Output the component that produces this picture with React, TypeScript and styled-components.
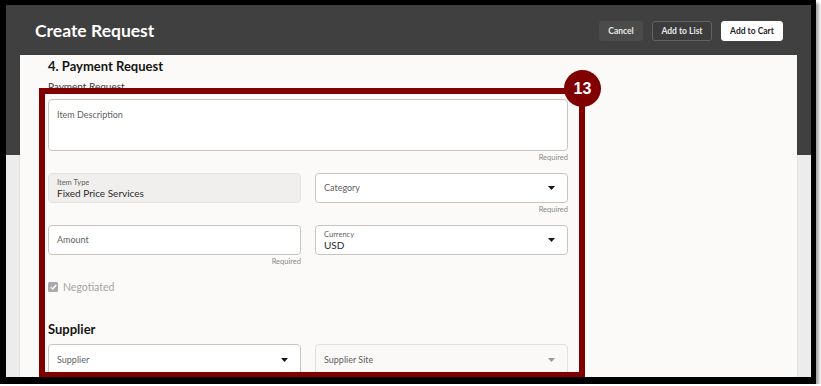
import React from 'react';
import styled, { createGlobalStyle } from 'styled-components';

const Global = createGlobalStyle`
  html, body { margin: 0; padding: 0; background: #ffffff; }
  body { font-family: Lato, "Noto Sans", sans-serif; }
  * { box-sizing: border-box; }
`;

const Frame = styled.div`
  width: 816px;
  height: 384px;
  border-style: solid;
  border-color: #000;
  border-width: 5px 5px 7px 6px;
  box-shadow: 3px 3px 3px rgba(0, 0, 0, 0.35);
  display: flex;
  flex-direction: column;
  overflow: hidden;
  background: linear-gradient(to bottom, #404040 0, #404040 150px, #ececec 150px);
`;

const Header = styled.header`
  height: 50px;
  flex: none;
  display: flex;
  align-items: center;
  justify-content: space-between;
  padding: 2px 28px 0 29px;
`;

const Title = styled.h1`
  margin: 0;
  font-size: 17.5px;
  font-weight: 700;
  color: #ffffff;
  line-height: 22px;
`;

const Actions = styled.div`
  display: flex;
  gap: 9px;
`;

const Button = styled.button<{ $kind: 'ghost' | 'outline' | 'solid' }>`
  height: 20px;
  padding: 0;
  border-radius: 3px;
  font-family: Lato, "Noto Sans", sans-serif;
  font-size: 8.5px;
  font-weight: 700;
  cursor: pointer;
  border: 1px solid
    ${(p) => (p.$kind === 'outline' ? '#626262' : p.$kind === 'solid' ? '#ffffff' : '#4b4b4b')};
  background: ${(p) => (p.$kind === 'solid' ? '#ffffff' : p.$kind === 'ghost' ? '#4b4b4b' : '#3c3c3c')};
  color: ${(p) => (p.$kind === 'solid' ? '#1d1d1d' : '#e8e8e8')};
  width: ${(p) => (p.$kind === 'ghost' ? 44 : p.$kind === 'outline' ? 60 : 62)}px;
`;

const Panel = styled.main`
  flex: 1;
  min-height: 0;
  margin: 0 14px;
  background: #fbfaf8;
  position: relative;
  overflow: hidden;
  padding: 3px 28px 0;
  box-shadow: 0 0 1px rgba(0, 0, 0, 0.25);
`;

const SectionTitle = styled.h2<{ $gap?: number }>`
  margin: ${(p) => p.$gap ?? 0}px 0 0;
  font-size: 13px;
  font-weight: 700;
  line-height: 16px;
  color: #161513;
`;

const SubTitle = styled.div`
  margin-top: 5px;
  font-size: 10px;
  line-height: 14px;
  color: #3a3a3a;
`;

const Form = styled.div`
  margin-top: 6px;
  width: 520px;
  display: flex;
  flex-direction: column;
`;

const Row = styled.div<{ $gap?: number }>`
  display: grid;
  grid-template-columns: 1fr 1fr;
  column-gap: 14px;
  margin-top: ${(p) => p.$gap ?? 0}px;
`;

const FieldGroup = styled.div`
  display: flex;
  flex-direction: column;
`;

const Field = styled.div<{ $variant?: 'input' | 'readonly' | 'disabled'; $h?: number; $top?: boolean }>`
  height: ${(p) => p.$h ?? 30}px;
  border-radius: 4px;
  border: 1px solid
    ${(p) => (p.$variant === 'readonly' ? '#e4e1dd' : p.$variant === 'disabled' ? '#e3e1de' : '#c8c5c1')};
  background: ${(p) => (p.$variant === 'readonly' ? '#f1efed' : p.$variant === 'disabled' ? '#faf9f7' : '#ffffff')};
  display: flex;
  align-items: ${(p) => (p.$top ? 'flex-start' : 'center')};
  justify-content: space-between;
  padding: ${(p) => (p.$top ? '9px 12px 0 8px' : '0 12px 0 8px')};
`;

const Stack = styled.div`
  display: flex;
  flex-direction: column;
`;

const Label = styled.span`
  font-size: 9px;
  line-height: 12px;
  color: #5f5f5f;
`;

const SmallLabel = styled.span`
  font-size: 7.5px;
  line-height: 9px;
  color: #5f5f5f;
`;

const Value = styled.span`
  font-size: 10px;
  line-height: 12px;
  color: #2a2a2a;
`;

const Helper = styled.div`
  margin-top: 2px;
  height: 10px;
  line-height: 10px;
  font-size: 7.5px;
  color: #8a8a8a;
  text-align: right;
`;

const CheckRow = styled.label`
  margin-top: 14px;
  height: 12px;
  display: flex;
  align-items: center;
  gap: 5px;
  font-size: 10.5px;
  color: #a5a5a5;
`;

const Box = styled.span`
  width: 10px;
  height: 10px;
  border-radius: 1.5px;
  background: #a9a9a9;
  display: flex;
  align-items: center;
  justify-content: center;
`;

const Annotation = styled.div`
  position: absolute;
  left: 19px;
  top: 33px;
  width: 546px;
  height: 290px;
  border: 6px solid #800000;
  pointer-events: none;
`;

const Badge = styled.div`
  position: absolute;
  top: -24px;
  right: -22px;
  width: 37px;
  height: 37px;
  border-radius: 50%;
  background: #800000;
  color: #ffffff;
  font-family: "Liberation Sans", Arial, sans-serif;
  font-size: 16px;
  font-weight: 700;
  display: flex;
  align-items: center;
  justify-content: center;
`;

const Caret = ({ light }: { light?: boolean }) => (
  <svg width="7" height="4" viewBox="0 0 7 4">
    <path d="M0 0 L7 0 L3.5 4 Z" fill={light ? '#9c9a98' : '#161513'} />
  </svg>
);

export default function App() {
  return (
    <>
      <Global />
      <Frame>
        <Header>
          <Title>Create Request</Title>
          <Actions>
            <Button $kind="ghost">Cancel</Button>
            <Button $kind="outline">Add to List</Button>
            <Button $kind="solid">Add to Cart</Button>
          </Actions>
        </Header>
        <Panel>
          <SectionTitle>4. Payment Request</SectionTitle>
          <SubTitle>Payment Request</SubTitle>
          <Form>
            <FieldGroup>
              <Field $h={52} $top>
                <Label>Item Description</Label>
              </Field>
              <Helper>Required</Helper>
            </FieldGroup>
            <Row $gap={10}>
              <FieldGroup>
                <Field $variant="readonly">
                  <Stack>
                    <SmallLabel>Item Type</SmallLabel>
                    <Value>Fixed Price Services</Value>
                  </Stack>
                </Field>
                <Helper />
              </FieldGroup>
              <FieldGroup>
                <Field>
                  <Label>Category</Label>
                  <Caret />
                </Field>
                <Helper>Required</Helper>
              </FieldGroup>
            </Row>
            <Row $gap={10}>
              <FieldGroup>
                <Field>
                  <Label>Amount</Label>
                </Field>
                <Helper>Required</Helper>
              </FieldGroup>
              <FieldGroup>
                <Field>
                  <Stack>
                    <SmallLabel>Currency</SmallLabel>
                    <Value>USD</Value>
                  </Stack>
                  <Caret />
                </Field>
                <Helper />
              </FieldGroup>
            </Row>
            <CheckRow>
              <Box>
                <svg width="7" height="6" viewBox="0 0 7 6">
                  <path d="M0.8 3.2 L2.7 5 L6.2 1" fill="none" stroke="#ffffff" strokeWidth="1.3" />
                </svg>
              </Box>
              Negotiated
            </CheckRow>
            <SectionTitle $gap={28}>Supplier</SectionTitle>
            <Row $gap={7}>
              <Field $h={32}>
                <Label>Supplier</Label>
                <Caret />
              </Field>
              <Field $h={32} $variant="disabled">
                <Label>Supplier Site</Label>
                <Caret light />
              </Field>
            </Row>
          </Form>
          <Annotation>
            <Badge>13</Badge>
          </Annotation>
        </Panel>
      </Frame>
    </>
  );
}
